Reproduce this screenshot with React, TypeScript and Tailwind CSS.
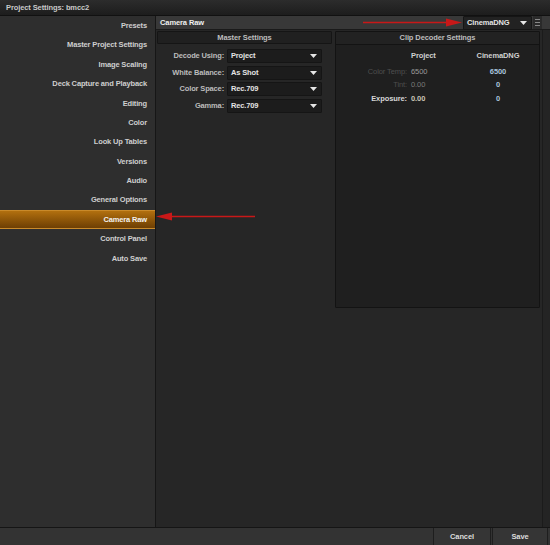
import React from 'react';

const navItems = [
  'Presets',
  'Master Project Settings',
  'Image Scaling',
  'Deck Capture and Playback',
  'Editing',
  'Color',
  'Look Up Tables',
  'Versions',
  'Audio',
  'General Options',
  'Camera Raw',
  'Control Panel',
  'Auto Save',
];

const masterRows = [
  { label: 'Decode Using:', value: 'Project' },
  { label: 'White Balance:', value: 'As Shot' },
  { label: 'Color Space:', value: 'Rec.709' },
  { label: 'Gamma:', value: 'Rec.709' },
];

const Caret = () => (
  <svg width="7" height="4" viewBox="0 0 7 4" className="shrink-0">
    <path d="M0 0h7L3.5 4z" fill="#e6e6e6" />
  </svg>
);

const Select: React.FC<{ value: string; className?: string }> = ({ value, className = '' }) => (
  <div
    className={`flex h-[14px] items-center justify-between rounded-[1px] border border-[#151515] bg-[#1c1c1c] pl-[3px] pr-[4px] text-[7.5px] font-bold tracking-[-0.15px] text-[#e4e4e4] ${className}`}
  >
    <span>{value}</span>
    <Caret />
  </div>
);

export default function App() {
  return (
    <div className="relative flex h-[545px] w-[550px] flex-col overflow-hidden bg-[#262626] font-['Liberation_Sans',Arial,sans-serif] leading-none">
      {/* title bar */}
      <div className="flex h-[16px] shrink-0 items-center border-b border-[#111] bg-gradient-to-b from-[#2c2c2c] to-[#1d1d1d] pl-[6px] text-[7.5px] font-bold tracking-[-0.1px] text-[#c9c9c9]">
        Project Settings: bmcc2
      </div>

      <div className="flex min-h-0 flex-1">
        {/* sidebar */}
        <div className="flex w-[156px] shrink-0 flex-col border-r border-[#161616] bg-[#2e2e2e]">
          {navItems.map((item) => (
            <div
              key={item}
              className={`flex h-[19.4px] items-center justify-end pr-[8px] text-[7.5px] font-bold tracking-[-0.15px] ${
                item === 'Camera Raw'
                  ? 'border-y border-[#c98a2a] bg-gradient-to-b from-[#b2700f] to-[#6e3f04] text-[#f2f2f2]'
                  : 'text-[#cfcfcf]'
              }`}
            >
              {item}
            </div>
          ))}
        </div>

        {/* main */}
        <div className="flex min-w-0 flex-1 flex-col">
          <div className="flex h-[14px] shrink-0 items-center border-b border-[#1a1a1a] bg-[#383838] pl-[4px] pr-[8px]">
            <span className="flex-1 text-[7.5px] font-bold tracking-[-0.1px] text-[#efefef]">Camera Raw</span>
            <Select value="CinemaDNG" className="h-[13px] w-[69px] border-[#1a1a1a] bg-[#222]" />
            <div className="ml-[1px] flex h-[13px] w-[9px] flex-col items-center justify-center gap-[2px] bg-[#2a2a2a]">
              <span className="h-[1px] w-[5px] bg-[#888]" />
              <span className="h-[1px] w-[5px] bg-[#888]" />
              <span className="h-[1px] w-[5px] bg-[#888]" />
            </div>
          </div>

          <div className="flex min-h-0 flex-1">
            <div className="flex min-w-0 flex-1 gap-[3px] pl-[1px] pt-[1px]">
              {/* master settings */}
              <div className="flex w-[175px] shrink-0 flex-col">
                <div className="flex h-[13px] items-center justify-center rounded-[1px] border border-[#151515] bg-[#202020] text-[7.5px] font-bold tracking-[-0.1px] text-[#bdbdbd]">
                  Master Settings
                </div>
                <div className="mt-[5px] flex flex-col gap-[2.5px]">
                  {masterRows.map((r) => (
                    <div key={r.label} className="flex items-center">
                      <span className="w-[70px] pr-[3px] text-right text-[7.5px] font-bold tracking-[-0.15px] text-[#bcbcbc]">
                        {r.label}
                      </span>
                      <Select value={r.value} className="w-[95px]" />
                    </div>
                  ))}
                </div>
              </div>

              {/* clip decoder settings */}
              <div className="flex h-[277px] w-[205px] shrink-0 flex-col rounded-[1px] border border-[#131313] bg-[#1f1f1f]">
                <div className="flex h-[13px] items-center justify-center border-b border-[#131313] bg-[#222] text-[7.5px] font-bold tracking-[-0.1px] text-[#bdbdbd]">
                  Clip Decoder Settings
                </div>
                <div className="mt-[7px] grid grid-cols-[75px_58px_1fr] gap-y-[6px] pr-[12px] text-[7.5px] font-bold tracking-[-0.1px]">
                  <span />
                  <span className="mb-[2px] text-[#d0d0d0]">Project</span>
                  <span className="mb-[2px] text-center text-[#d0d0d0]">CinemaDNG</span>

                  <span className="pr-[4px] text-right font-normal text-[#4e4e4e]">Color Temp:</span>
                  <span className="font-normal text-[#9a9a9a]">6500</span>
                  <span className="text-center text-[#a9c4dd]">6500</span>

                  <span className="pr-[4px] text-right font-normal text-[#4e4e4e]">Tint:</span>
                  <span className="font-normal text-[#7a7a7a]">0.00</span>
                  <span className="text-center text-[#a9c4dd]">0</span>

                  <span className="pr-[4px] text-right text-[#d6d6d6]">Exposure:</span>
                  <span className="text-[#c9c3b6]">0.00</span>
                  <span className="text-center text-[#a9c4dd]">0</span>
                </div>
              </div>
            </div>
            {/* right strip */}
            <div className="w-[8px] shrink-0 border-l border-[#1b1b1b] bg-[#242424]" />
          </div>
        </div>
      </div>

      {/* bottom bar */}
      <div className="flex h-[18px] shrink-0 items-stretch justify-end border-t border-[#151515] bg-[#333] pr-[2px]">
        <div className="flex w-[58px] items-center justify-center border-x border-[#1e1e1e] bg-[#353535] text-[7.5px] font-bold tracking-[-0.1px] text-[#dcdcdc]">
          Cancel
        </div>
        <div className="ml-[1px] flex w-[56px] items-center justify-center border-x border-[#1e1e1e] bg-[#353535] text-[7.5px] font-bold tracking-[-0.1px] text-[#dcdcdc]">
          Save
        </div>
      </div>

      {/* annotation arrows */}
      <svg className="pointer-events-none absolute left-0 top-0" width="550" height="545">
        <line x1="363" y1="22.5" x2="450" y2="22.5" stroke="#c81818" strokeWidth="1.6" />
        <path d="M446 18.5 L462 22.5 L446 26.5 Z" fill="#c81818" />
        <line x1="255" y1="216.5" x2="168" y2="216.5" stroke="#c81818" strokeWidth="1.6" />
        <path d="M172 212.5 L156 216.5 L172 220.5 Z" fill="#c81818" />
      </svg>
    </div>
  );
}
